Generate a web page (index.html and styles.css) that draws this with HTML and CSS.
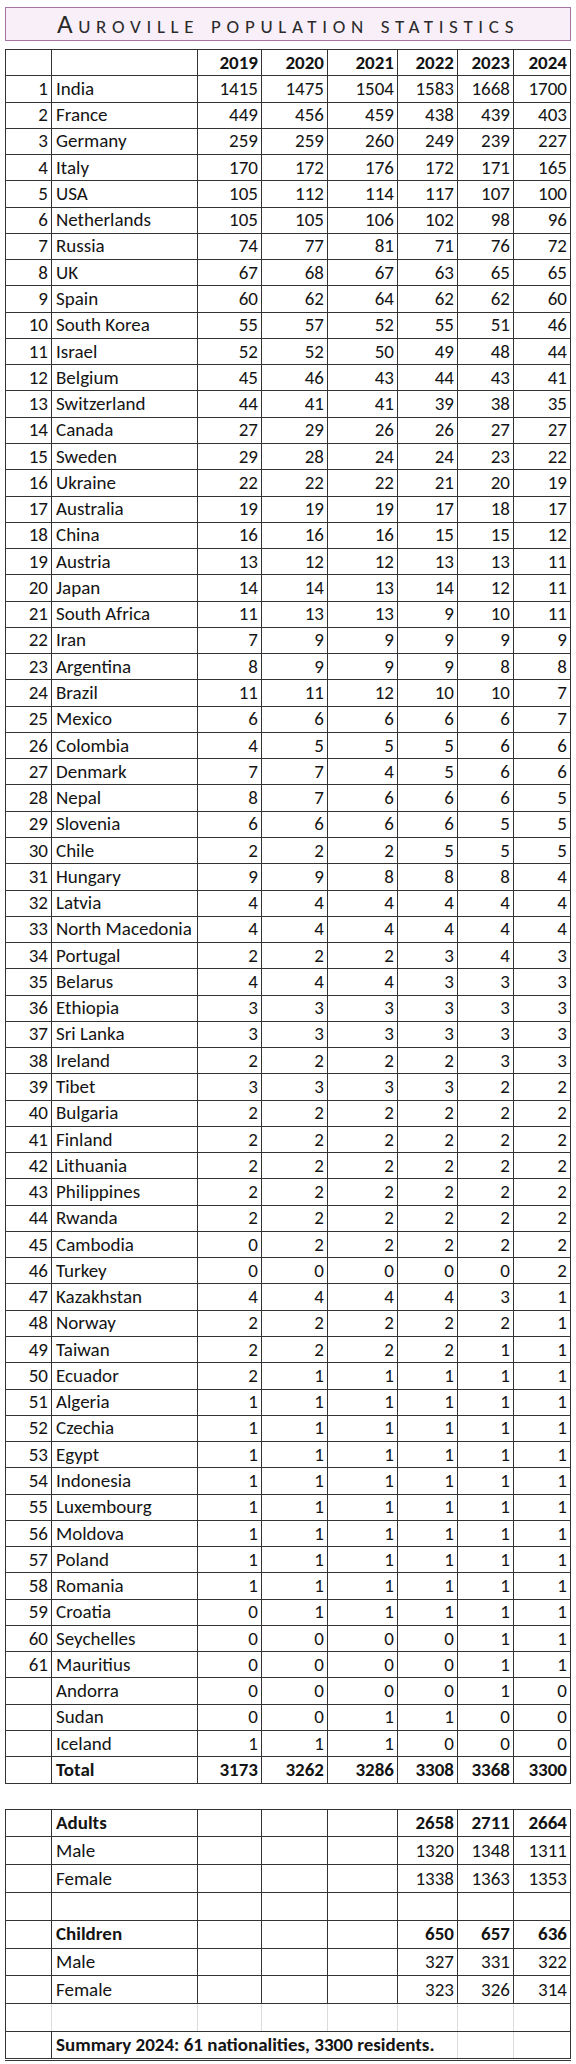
FILE: index.html
```html
<!DOCTYPE html>
<html>
<head>
<meta charset="utf-8">
<title>Auroville population statistics</title>
<link rel="stylesheet" href="styles.css">
</head>
<body>
<div class="title">Auroville population statistics</div>
<table class="stats">
<colgroup><col class="c-idx"><col class="c-name"><col class="c-19"><col class="c-20"><col class="c-21"><col class="c-22"><col class="c-23"><col class="c-24"></colgroup>
<tr class="head"><td></td><td></td><td>2019</td><td>2020</td><td>2021</td><td>2022</td><td>2023</td><td>2024</td></tr>
<tr><td>1</td><td>India</td><td>1415</td><td>1475</td><td>1504</td><td>1583</td><td>1668</td><td>1700</td></tr>
<tr><td>2</td><td>France</td><td>449</td><td>456</td><td>459</td><td>438</td><td>439</td><td>403</td></tr>
<tr><td>3</td><td>Germany</td><td>259</td><td>259</td><td>260</td><td>249</td><td>239</td><td>227</td></tr>
<tr><td>4</td><td>Italy</td><td>170</td><td>172</td><td>176</td><td>172</td><td>171</td><td>165</td></tr>
<tr><td>5</td><td>USA</td><td>105</td><td>112</td><td>114</td><td>117</td><td>107</td><td>100</td></tr>
<tr><td>6</td><td>Netherlands</td><td>105</td><td>105</td><td>106</td><td>102</td><td>98</td><td>96</td></tr>
<tr><td>7</td><td>Russia</td><td>74</td><td>77</td><td>81</td><td>71</td><td>76</td><td>72</td></tr>
<tr><td>8</td><td>UK</td><td>67</td><td>68</td><td>67</td><td>63</td><td>65</td><td>65</td></tr>
<tr><td>9</td><td>Spain</td><td>60</td><td>62</td><td>64</td><td>62</td><td>62</td><td>60</td></tr>
<tr><td>10</td><td>South Korea</td><td>55</td><td>57</td><td>52</td><td>55</td><td>51</td><td>46</td></tr>
<tr><td>11</td><td>Israel</td><td>52</td><td>52</td><td>50</td><td>49</td><td>48</td><td>44</td></tr>
<tr><td>12</td><td>Belgium</td><td>45</td><td>46</td><td>43</td><td>44</td><td>43</td><td>41</td></tr>
<tr><td>13</td><td>Switzerland</td><td>44</td><td>41</td><td>41</td><td>39</td><td>38</td><td>35</td></tr>
<tr><td>14</td><td>Canada</td><td>27</td><td>29</td><td>26</td><td>26</td><td>27</td><td>27</td></tr>
<tr><td>15</td><td>Sweden</td><td>29</td><td>28</td><td>24</td><td>24</td><td>23</td><td>22</td></tr>
<tr><td>16</td><td>Ukraine</td><td>22</td><td>22</td><td>22</td><td>21</td><td>20</td><td>19</td></tr>
<tr><td>17</td><td>Australia</td><td>19</td><td>19</td><td>19</td><td>17</td><td>18</td><td>17</td></tr>
<tr><td>18</td><td>China</td><td>16</td><td>16</td><td>16</td><td>15</td><td>15</td><td>12</td></tr>
<tr><td>19</td><td>Austria</td><td>13</td><td>12</td><td>12</td><td>13</td><td>13</td><td>11</td></tr>
<tr><td>20</td><td>Japan</td><td>14</td><td>14</td><td>13</td><td>14</td><td>12</td><td>11</td></tr>
<tr><td>21</td><td>South Africa</td><td>11</td><td>13</td><td>13</td><td>9</td><td>10</td><td>11</td></tr>
<tr><td>22</td><td>Iran</td><td>7</td><td>9</td><td>9</td><td>9</td><td>9</td><td>9</td></tr>
<tr><td>23</td><td>Argentina</td><td>8</td><td>9</td><td>9</td><td>9</td><td>8</td><td>8</td></tr>
<tr><td>24</td><td>Brazil</td><td>11</td><td>11</td><td>12</td><td>10</td><td>10</td><td>7</td></tr>
<tr><td>25</td><td>Mexico</td><td>6</td><td>6</td><td>6</td><td>6</td><td>6</td><td>7</td></tr>
<tr><td>26</td><td>Colombia</td><td>4</td><td>5</td><td>5</td><td>5</td><td>6</td><td>6</td></tr>
<tr><td>27</td><td>Denmark</td><td>7</td><td>7</td><td>4</td><td>5</td><td>6</td><td>6</td></tr>
<tr><td>28</td><td>Nepal</td><td>8</td><td>7</td><td>6</td><td>6</td><td>6</td><td>5</td></tr>
<tr><td>29</td><td>Slovenia</td><td>6</td><td>6</td><td>6</td><td>6</td><td>5</td><td>5</td></tr>
<tr><td>30</td><td>Chile</td><td>2</td><td>2</td><td>2</td><td>5</td><td>5</td><td>5</td></tr>
<tr><td>31</td><td>Hungary</td><td>9</td><td>9</td><td>8</td><td>8</td><td>8</td><td>4</td></tr>
<tr><td>32</td><td>Latvia</td><td>4</td><td>4</td><td>4</td><td>4</td><td>4</td><td>4</td></tr>
<tr><td>33</td><td>North Macedonia</td><td>4</td><td>4</td><td>4</td><td>4</td><td>4</td><td>4</td></tr>
<tr><td>34</td><td>Portugal</td><td>2</td><td>2</td><td>2</td><td>3</td><td>4</td><td>3</td></tr>
<tr><td>35</td><td>Belarus</td><td>4</td><td>4</td><td>4</td><td>3</td><td>3</td><td>3</td></tr>
<tr><td>36</td><td>Ethiopia</td><td>3</td><td>3</td><td>3</td><td>3</td><td>3</td><td>3</td></tr>
<tr><td>37</td><td>Sri Lanka</td><td>3</td><td>3</td><td>3</td><td>3</td><td>3</td><td>3</td></tr>
<tr><td>38</td><td>Ireland</td><td>2</td><td>2</td><td>2</td><td>2</td><td>3</td><td>3</td></tr>
<tr><td>39</td><td>Tibet</td><td>3</td><td>3</td><td>3</td><td>3</td><td>2</td><td>2</td></tr>
<tr><td>40</td><td>Bulgaria</td><td>2</td><td>2</td><td>2</td><td>2</td><td>2</td><td>2</td></tr>
<tr><td>41</td><td>Finland</td><td>2</td><td>2</td><td>2</td><td>2</td><td>2</td><td>2</td></tr>
<tr><td>42</td><td>Lithuania</td><td>2</td><td>2</td><td>2</td><td>2</td><td>2</td><td>2</td></tr>
<tr><td>43</td><td>Philippines</td><td>2</td><td>2</td><td>2</td><td>2</td><td>2</td><td>2</td></tr>
<tr><td>44</td><td>Rwanda</td><td>2</td><td>2</td><td>2</td><td>2</td><td>2</td><td>2</td></tr>
<tr><td>45</td><td>Cambodia</td><td>0</td><td>2</td><td>2</td><td>2</td><td>2</td><td>2</td></tr>
<tr><td>46</td><td>Turkey</td><td>0</td><td>0</td><td>0</td><td>0</td><td>0</td><td>2</td></tr>
<tr><td>47</td><td>Kazakhstan</td><td>4</td><td>4</td><td>4</td><td>4</td><td>3</td><td>1</td></tr>
<tr><td>48</td><td>Norway</td><td>2</td><td>2</td><td>2</td><td>2</td><td>2</td><td>1</td></tr>
<tr><td>49</td><td>Taiwan</td><td>2</td><td>2</td><td>2</td><td>2</td><td>1</td><td>1</td></tr>
<tr><td>50</td><td>Ecuador</td><td>2</td><td>1</td><td>1</td><td>1</td><td>1</td><td>1</td></tr>
<tr><td>51</td><td>Algeria</td><td>1</td><td>1</td><td>1</td><td>1</td><td>1</td><td>1</td></tr>
<tr><td>52</td><td>Czechia</td><td>1</td><td>1</td><td>1</td><td>1</td><td>1</td><td>1</td></tr>
<tr><td>53</td><td>Egypt</td><td>1</td><td>1</td><td>1</td><td>1</td><td>1</td><td>1</td></tr>
<tr><td>54</td><td>Indonesia</td><td>1</td><td>1</td><td>1</td><td>1</td><td>1</td><td>1</td></tr>
<tr><td>55</td><td>Luxembourg</td><td>1</td><td>1</td><td>1</td><td>1</td><td>1</td><td>1</td></tr>
<tr><td>56</td><td>Moldova</td><td>1</td><td>1</td><td>1</td><td>1</td><td>1</td><td>1</td></tr>
<tr><td>57</td><td>Poland</td><td>1</td><td>1</td><td>1</td><td>1</td><td>1</td><td>1</td></tr>
<tr><td>58</td><td>Romania</td><td>1</td><td>1</td><td>1</td><td>1</td><td>1</td><td>1</td></tr>
<tr><td>59</td><td>Croatia</td><td>0</td><td>1</td><td>1</td><td>1</td><td>1</td><td>1</td></tr>
<tr><td>60</td><td>Seychelles</td><td>0</td><td>0</td><td>0</td><td>0</td><td>1</td><td>1</td></tr>
<tr><td>61</td><td>Mauritius</td><td>0</td><td>0</td><td>0</td><td>0</td><td>1</td><td>1</td></tr>
<tr><td></td><td>Andorra</td><td>0</td><td>0</td><td>0</td><td>0</td><td>1</td><td>0</td></tr>
<tr><td></td><td>Sudan</td><td>0</td><td>0</td><td>1</td><td>1</td><td>0</td><td>0</td></tr>
<tr><td></td><td>Iceland</td><td>1</td><td>1</td><td>1</td><td>0</td><td>0</td><td>0</td></tr>
<tr class="bold"><td></td><td>Total</td><td>3173</td><td>3262</td><td>3286</td><td>3308</td><td>3368</td><td>3300</td></tr>
</table>

<table class="stats summary">
<colgroup><col class="c-idx"><col class="c-name"><col class="c-19"><col class="c-20"><col class="c-21"><col class="c-22"><col class="c-23"><col class="c-24"></colgroup>
<tr class="bold"><td></td><td>Adults</td><td></td><td></td><td></td><td>2658</td><td>2711</td><td>2664</td></tr>
<tr><td></td><td>Male</td><td></td><td></td><td></td><td>1320</td><td>1348</td><td>1311</td></tr>
<tr><td></td><td>Female</td><td></td><td></td><td></td><td>1338</td><td>1363</td><td>1353</td></tr>
<tr><td></td><td></td><td></td><td></td><td></td><td></td><td></td><td></td></tr>
<tr class="bold"><td></td><td>Children</td><td></td><td></td><td></td><td>650</td><td>657</td><td>636</td></tr>
<tr><td></td><td>Male</td><td></td><td></td><td></td><td>327</td><td>331</td><td>322</td></tr>
<tr><td></td><td>Female</td><td></td><td></td><td></td><td>323</td><td>326</td><td>314</td></tr>
<tr class="blank"><td></td><td></td><td></td><td></td><td></td><td></td><td></td><td></td></tr>
<tr class="note"><td></td><td colspan="5">Summary 2024: 61 nationalities, 3300 residents.</td><td></td><td></td></tr>
</table>
</body>
</html>
```

FILE: styles.css
```css
html, body {
  margin: 0;
  padding: 0;
  background: #ffffff;
}

body {
  font-family: "Carlito", "Lato", "Liberation Sans", sans-serif;
  color: #141414;
}

.title {
  margin: 7px 5px 0 5px;
  height: 32px;
  border: 1px solid #a774a7;
  background: #f8eff8;
  text-align: center;
  font-size: 27px;
  line-height: 32px;
  font-variant: small-caps;
  letter-spacing: 5.7px;
  color: #2a2a2a;
}

.stats {
  margin: 8px 0 0 5px;
  width: 566px;
  border-collapse: collapse;
  table-layout: fixed;
  font-size: 19px;
}

.c-idx { width: 46px; }
.c-name { width: 146px; }
.c-19 { width: 64px; }
.c-20 { width: 66px; }
.c-21 { width: 70px; }
.c-22 { width: 60px; }
.c-23 { width: 56px; }
.c-24 { width: 57px; }

.stats tr {
  height: 26.27px;
}

.stats td {
  border: 1px solid #333333;
  padding: 0 3px 0 3px;
  text-align: right;
  white-space: nowrap;
  overflow: hidden;
  line-height: 20px;
  vertical-align: middle;
}

.stats td:nth-child(2) {
  text-align: left;
  padding-left: 4px;
}

.stats .head td,
.stats .bold td {
  font-weight: bold;
}

.summary {
  margin-top: 25px;
  border-bottom: 3px double #333333;
}

.summary tr {
  height: 27.8px;
}

.summary .blank td {
  border-left-color: #dcdcdc;
  border-right-color: #dcdcdc;
}

.summary .blank td:first-child {
  border-left-color: #333333;
}

.summary .blank td:last-child {
  border-right-color: #333333;
}

.summary .note td {
  font-weight: bold;
  border-left-color: #dcdcdc;
  border-right-color: #dcdcdc;
  border-bottom: 3px double #333333;
}

.summary .note td:first-child {
  border-left-color: #333333;
  border-right-color: #333333;
  font-weight: normal;
}

.summary .note td:nth-child(2) {
  border-left-color: #333333;
  overflow: visible;
}

.summary .note td:last-child {
  border-right-color: #333333;
}
```
